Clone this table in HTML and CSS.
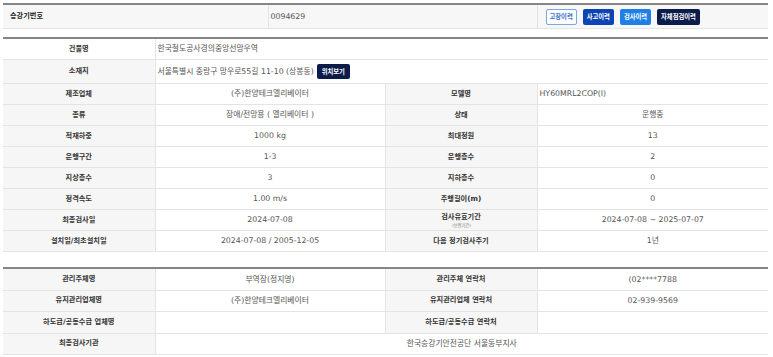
FILE: index.html
```html
<!DOCTYPE html>
<html lang="ko">
<head>
<meta charset="utf-8">
<title>승강기 정보</title>
<link rel="stylesheet" href="styles.css">
</head>
<body>
<div class="page">
  <table class="tbl tbl-head">
    <colgroup><col class="c-hl"><col class="c-hv"><col></colgroup>
    <tr>
      <th class="lbl-left">승강기번호</th>
      <td class="val-left">0094629</td>
      <td class="btn-cell">
        <div class="btns">
          <span class="btn btn-outline">고장이력</span>
          <span class="btn btn-blue">사고이력</span>
          <span class="btn btn-sky">검사이력</span>
          <span class="btn btn-navy">자체점검이력</span>
        </div>
      </td>
    </tr>
  </table>

  <table class="tbl tbl-info">
    <colgroup><col class="c-l"><col class="c-v"><col class="c-l"><col></colgroup>
    <tr class="r-plain">
      <th class="white">건물명</th>
      <td colspan="3" class="val-left">한국철도공사경의중앙선망우역</td>
    </tr>
    <tr class="r-addr">
      <th>소재지</th>
      <td colspan="3" class="val-left"><span class="addr">서울특별시 중랑구 망우로55길 11-10 (상봉동)<span class="btn btn-navy btn-map">위치보기</span></span></td>
    </tr>
    <tr>
      <th>제조업체</th><td>(주)한양테크엘리베이터</td>
      <th>모델명</th><td class="val-left">HY60MRL2COP(I)</td>
    </tr>
    <tr>
      <th>종류</th><td>장애/전망용 ( 엘리베이터 )</td>
      <th>상태</th><td>운행중</td>
    </tr>
    <tr>
      <th>적재하중</th><td>1000 kg</td>
      <th>최대정원</th><td>13</td>
    </tr>
    <tr>
      <th>운행구간</th><td>1-3</td>
      <th>운행층수</th><td>2</td>
    </tr>
    <tr>
      <th>지상층수</th><td>3</td>
      <th>지하층수</th><td>0</td>
    </tr>
    <tr>
      <th>정격속도</th><td>1.00 m/s</td>
      <th>주행길이(m)</th><td>0</td>
    </tr>
    <tr>
      <th>최종검사일</th><td>2024-07-08</td>
      <th class="two-line"><span class="main">검사유효기간</span><span class="sub">(보완기간)</span></th><td>2024-07-08 ~ 2025-07-07</td>
    </tr>
    <tr>
      <th>설치일/최초설치일</th><td>2024-07-08 / 2005-12-05</td>
      <th>다음 정기검사주기</th><td>1년</td>
    </tr>
  </table>

  <table class="tbl tbl-mgmt">
    <colgroup><col class="c-l"><col class="c-v"><col class="c-l"><col></colgroup>
    <tr>
      <th>관리주체명</th><td>부역장(정지영)</td>
      <th>관리주체 연락처</th><td>(02****7788</td>
    </tr>
    <tr>
      <th>유지관리업체명</th><td>(주)한양테크엘리베이터</td>
      <th>유지관리업체 연락처</th><td>02-939-9569</td>
    </tr>
    <tr>
      <th>하도급/공동수급 업체명</th><td></td>
      <th>하도급/공동수급 연락처</th><td></td>
    </tr>
    <tr>
      <th>최종검사기관</th><td colspan="3">한국승강기안전공단 서울동부지사</td>
    </tr>
  </table>
</div>
</body>
</html>
```

FILE: styles.css
```css
html, body {
  margin: 0;
  padding: 0;
  background: #ffffff;
}

.page {
  padding: 3px 5px 0 3px;
  font-family: "DejaVu Sans", "Noto Sans CJK KR", sans-serif;
  font-size: 7.8px;
  color: #555555;
}

.tbl {
  width: 100%;
  border-collapse: collapse;
  table-layout: fixed;
  border-top: 2px solid #858585;
}

.tbl th,
.tbl td {
  padding: 0 4px;
  border-bottom: 1px solid #e4e4e4;
  border-left: 1px solid #e4e4e4;
  text-align: center;
  vertical-align: middle;
  line-height: 1.2;
  white-space: nowrap;
}

.tbl tr > :first-child {
  border-left: none;
}

.tbl th {
  font-size: 7.2px;
  font-weight: 700;
  color: #333333;
  background: #f6f6f6;
}

.tbl td {
  background: #ffffff;
}

.c-hl { width: 265px; }
.c-hv { width: 269px; }
.c-l { width: 152px; }
.c-v { width: 230px; }

/* head table */
.tbl-head th,
.tbl-head td {
  height: 23px;
  background: #f7f7f7;
}

.tbl-head .lbl-left {
  text-align: left;
  padding-left: 7px;
  color: #222222;
}

.val-left {
  text-align: left !important;
  padding-left: 2px !important;
}

.btn-cell {
  padding-left: 8px !important;
}

.btns {
  display: flex;
  gap: 6px;
  align-items: center;
}

.btn {
  display: inline-flex;
  align-items: center;
  justify-content: center;
  height: 16px;
  padding: 0 3px;
  box-sizing: border-box;
  border-radius: 2px;
  font-size: 6.3px;
  font-weight: 700;
  color: #ffffff;
  border: 1px solid transparent;
}

.btn-outline {
  background: #ffffff;
  border-color: #79a8e6;
  color: #3c73c8;
}

.btn-blue { background: #0c44b4; }
.btn-sky { background: #1e7fe6; }
.btn-navy { background: #0b1b4a; }

/* info table */
.tbl-info {
  margin-top: 8px;
}

.tbl-info th,
.tbl-info td,
.tbl-mgmt th,
.tbl-mgmt td {
  height: 20px;
}

.tbl-info th.white {
  background: #ffffff;
}

.tbl-info .r-addr th,
.tbl-info .r-addr td {
  height: 23px;
}

.addr {
  display: inline-flex;
  align-items: center;
  gap: 3px;
}

.btn-map {
  height: 15px;
  padding: 0 4px;
}

.two-line {
  line-height: 1;
}

.two-line .main {
  display: block;
  line-height: 10px;
  margin-top: 1px;
}

.two-line .sub {
  display: block;
  height: 7px;
  line-height: 7px;
  font-size: 6px;
  font-weight: 400;
  color: #777777;
  transform: scale(0.7);
  transform-origin: center center;
}

/* management table */
.tbl-mgmt {
  margin-top: 15px;
}

.tbl-mgmt th,
.tbl-mgmt td {
  height: 20.5px;
}
```
